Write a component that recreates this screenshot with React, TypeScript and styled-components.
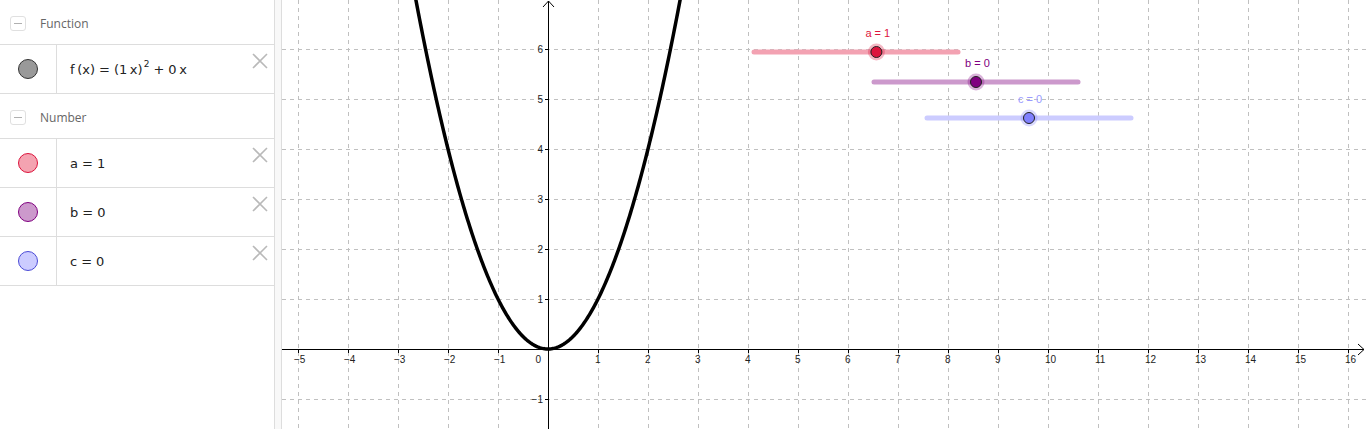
import React from "react";
import styled, { createGlobalStyle } from "styled-components";

const Global = createGlobalStyle`
  html, body { margin: 0; padding: 0; background: #fff; overflow: hidden; }
  #root { width: 1366px; height: 429px; }
`;

const Page = styled.div`
  display: flex;
  width: 1366px;
  height: 429px;
  font-family: "Liberation Sans", Arial, sans-serif;
  background: #fff;
`;

const AlgebraPanel = styled.aside`
  width: 275px;
  flex: none;
  box-sizing: border-box;
  border-right: 1px solid #dddddd;
  display: flex;
  flex-direction: column;
`;

const Splitter = styled.div`
  width: 7px;
  flex: none;
  box-sizing: border-box;
  background: #f8f8f8;
  border-right: 1px solid #dddddd;
`;

const GraphView = styled.main`
  flex: 1;
  position: relative;
  overflow: hidden;
`;

const GroupHeader = styled.div`
  height: 45px;
  box-sizing: border-box;
  padding-top: 3px;
  border-bottom: 1px solid #dddddd;
  display: flex;
  align-items: center;
  gap: 14px;
  padding-left: 10px;
`;

const CollapseBox = styled.span`
  width: 16px;
  height: 15px;
  box-sizing: border-box;
  border: 1px solid #e0e0e0;
  border-radius: 3px;
  display: flex;
  align-items: center;
  justify-content: center;
  &::before {
    content: "";
    width: 8px;
    height: 1px;
    background: #b0b0b0;
  }
`;

const GroupLabel = styled.span`
  font-family: "Open Sans", "Liberation Sans", sans-serif;
  font-size: 12px;
  color: #666666;
`;

const ItemRow = styled.div`
  height: 49px;
  box-sizing: border-box;
  border-bottom: 1px solid #dddddd;
  display: flex;
`;

const MarbleCell = styled.div`
  width: 57px;
  flex: none;
  box-sizing: border-box;
  border-right: 1px solid #dddddd;
  display: flex;
  align-items: center;
  justify-content: center;
`;

const Marble = styled.span<{ $fill: string; $stroke: string }>`
  width: 20px;
  height: 20px;
  box-sizing: border-box;
  border-radius: 50%;
  background: ${(p) => p.$fill};
  border: 1px solid ${(p) => p.$stroke};
`;

const Formula = styled.div`
  flex: 1;
  display: flex;
  align-items: center;
  padding-left: 13px;
  padding-top: 1px;
  font-family: "DejaVu Sans", sans-serif;
  font-size: 13px;
  color: #222;
  white-space: pre;
`;

const Op = styled.span`
  margin: 0 4px;
`;

const Sup = styled.span`
  font-size: 9px;
  line-height: 1;
  margin: 0 0 11px 1px;
`;

const DeleteButton = styled.button`
  align-self: flex-start;
  margin: 8px 6px 0 0;
  padding: 0;
  width: 16px;
  height: 16px;
  border: none;
  background: none;
  display: flex;
`;

const CloseIcon = () => (
  <svg width="16" height="16" viewBox="0 0 16 16">
    <path d="M1 1 L15 15 M15 1 L1 15" stroke="#b9b9b9" strokeWidth="1.6" fill="none" />
  </svg>
);

const X0 = 548;
const Y0 = 349;
const U = 50;
const px = (x: number) => X0 + x * U;
const py = (y: number) => Y0 - y * U;

const GRID = "#c0c0c0";

type SliderDef = {
  name: string;
  value: number;
  start: number;
  y: number;
  frac: number;
  line: string;
  point: string;
  label: string;
};

const sliders: SliderDef[] = [
  { name: "a", value: 1, start: 754, y: 52, frac: 0.6, line: "#f3a2b2", point: "#dc143c", label: "#dc143c" },
  { name: "b", value: 0, start: 874, y: 82, frac: 0.5, line: "#cc99cc", point: "#800080", label: "#800080" },
  { name: "c", value: 0, start: 927, y: 118, frac: 0.5, line: "#ccccff", point: "#8080ff", label: "#9a9aff" },
];

const SLIDER_W = 204;

function parabolaPath() {
  const pts: string[] = [];
  for (let x = -2.75; x <= 2.75001; x += 0.02) {
    const X = px(x);
    const Y = py(x * x);
    pts.push(`${pts.length ? "L" : "M"}${X.toFixed(2)} ${Y.toFixed(2)}`);
  }
  return pts.join(" ");
}

const Graph = () => {
  const xs: number[] = [];
  for (let k = -5; k <= 16; k++) xs.push(k);
  const ys: number[] = [];
  for (let k = -1; k <= 6; k++) ys.push(k);
  return (
    <svg width="1084" height="429" viewBox="282 0 1084 429" style={{ display: "block" }}>
      <g stroke={GRID} strokeWidth="1" strokeDasharray="4 4" shapeRendering="crispEdges">
        {xs.map((k) =>
          k === 0 ? null : <line key={"v" + k} x1={px(k) + 0.5} y1={0} x2={px(k) + 0.5} y2={429} />
        )}
        {ys.map((k) =>
          k === 0 ? null : <line key={"h" + k} x1={282} y1={py(k) + 0.5} x2={1366} y2={py(k) + 0.5} />
        )}
      </g>
      <g stroke="#000" strokeWidth="1" fill="none" shapeRendering="crispEdges">
        <line x1={282} y1={Y0 + 0.5} x2={1364} y2={Y0 + 0.5} />
        <line x1={X0 + 0.5} y1={1} x2={X0 + 0.5} y2={429} />
      </g>
      <g stroke="#000" strokeWidth="1" fill="none">
        <path d={`M1358 ${Y0 - 5} L1364 ${Y0 + 0.5} L1358 ${Y0 + 6}`} />
        <path d={`M${X0 - 5} 7 L${X0 + 0.5} 1 L${X0 + 6} 7`} />
      </g>
      <g stroke="#000" strokeWidth="1" shapeRendering="crispEdges">
        {xs.map((k) =>
          k === 0 ? null : <line key={"tx" + k} x1={px(k) + 0.5} y1={Y0} x2={px(k) + 0.5} y2={Y0 + 4} />
        )}
        {ys.map((k) =>
          k === 0 ? null : <line key={"ty" + k} x1={X0 - 3} y1={py(k) + 0.5} x2={X0 + 1} y2={py(k) + 0.5} />
        )}
      </g>
      <g fontFamily="'Liberation Sans', Arial, sans-serif" fontSize="10" fill="#222">
        {xs.map((k) =>
          k === 0 ? null : (
            <text key={"lx" + k} x={k < 0 ? px(k) - 4 : px(k) - 3} y={Y0 + 14} textAnchor="start">
              {k < 0 ? "\u2212" + Math.abs(k) : String(k)}
            </text>
          )
        )}
        <text x={X0 - 7} y={Y0 + 14} textAnchor="end">0</text>
        {ys.map((k) =>
          k === 0 ? null : (
            <text key={"ly" + k} x={X0 - 5} y={py(k) + 4} textAnchor="end">
              {k < 0 ? "\u2212" + Math.abs(k) : String(k)}
            </text>
          )
        )}
      </g>
      <path d={parabolaPath()} stroke="#000" strokeWidth="3.5" fill="none" strokeLinejoin="round" />
      {sliders.map((s) => {
        const cx = s.start + s.frac * SLIDER_W;
        return (
          <g key={s.name}>
            <line
              x1={s.start}
              y1={s.y}
              x2={s.start + SLIDER_W}
              y2={s.y}
              stroke={s.line}
              strokeWidth="5"
              strokeLinecap="round"
            />
            <circle cx={cx} cy={s.y} r={8.5} fill={s.point} opacity={0.3} />
            <circle cx={cx} cy={s.y} r={5.5} fill={s.point} stroke="#222" strokeWidth="1" />
            <text
              x={cx - 11}
              y={s.y - 15}
              fontFamily="'Liberation Sans', Arial, sans-serif"
              fontSize="11"
              fill={s.label}
            >
              {`${s.name} = ${s.value}`}
            </text>
          </g>
        );
      })}
    </svg>
  );
};

const numbers = [
  { name: "a", value: 1, fill: "#f4a3b1", stroke: "#dc143c" },
  { name: "b", value: 0, fill: "#cc99cc", stroke: "#800080" },
  { name: "c", value: 0, fill: "#ccccff", stroke: "#4b4bd6" },
];

const THIN = "\u2009";

export default function App() {
  return (
    <>
      <Global />
      <Page>
        <AlgebraPanel>
          <GroupHeader>
            <CollapseBox />
            <GroupLabel>Function</GroupLabel>
          </GroupHeader>
          <ItemRow>
            <MarbleCell>
              <Marble $fill="#999999" $stroke="#333333" />
            </MarbleCell>
            <Formula>
              <span>{`f${THIN}(x)`}</span>
              <Op>=</Op>
              <span>{`(1${THIN}x)`}</span>
              <Sup>2</Sup>
              <Op>+</Op>
              <span>{`0${THIN}x`}</span>
            </Formula>
            <DeleteButton aria-label="delete">
              <CloseIcon />
            </DeleteButton>
          </ItemRow>
          <GroupHeader>
            <CollapseBox />
            <GroupLabel>Number</GroupLabel>
          </GroupHeader>
          {numbers.map((n) => (
            <ItemRow key={n.name}>
              <MarbleCell>
                <Marble $fill={n.fill} $stroke={n.stroke} />
              </MarbleCell>
              <Formula>
                <span>{n.name}</span>
                <Op>=</Op>
                <span>{n.value}</span>
              </Formula>
              <DeleteButton aria-label="delete">
                <CloseIcon />
              </DeleteButton>
            </ItemRow>
          ))}
        </AlgebraPanel>
        <Splitter />
        <GraphView>
          <Graph />
        </GraphView>
      </Page>
    </>
  );
}
